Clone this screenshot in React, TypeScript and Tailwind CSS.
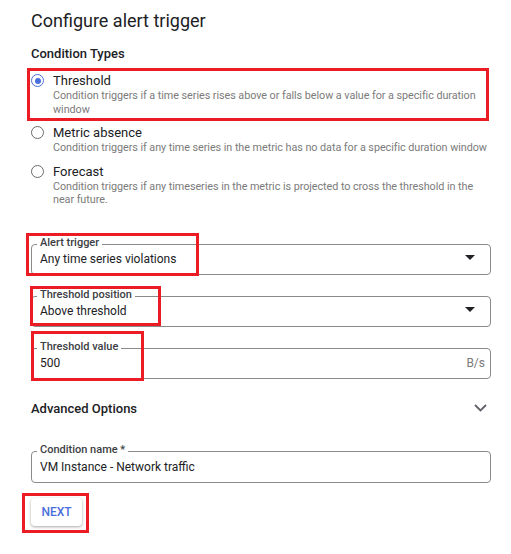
import React from "react";

// Configure alert trigger — form with annotation boxes (red) drawn over it

type OptionProps = {
  title: string;
  desc: string;
  selected?: boolean;
  mark?: boolean;
};

function ConditionOption({ title, desc, selected, mark }: OptionProps) {
  return (
    <div className="relative flex gap-[9px]">
      <div
        className={
          selected
            ? "mt-[2px] flex size-[13px] shrink-0 items-center justify-center rounded-full border-[1.5px] border-[#4a6fdc]"
            : "mt-[2px] size-[13px] shrink-0 rounded-full border border-[#6b6b6b]"
        }
      >
        {selected && <div className="size-[6px] rounded-full bg-[#4a6fdc]" />}
      </div>
      <div className="flex min-w-0 flex-col">
        <p className="text-[13px] leading-[17px] text-[#202124]">{title}</p>
        <p className="text-[10.8px] leading-[13.5px] tracking-[-0.05px] text-[#7b7b7b]">{desc}</p>
      </div>
      {mark && (
        <div className="pointer-events-none absolute -left-[4px] -top-[4px] h-[53px] w-[462px] border-[3px] border-[#ec1c24]" />
      )}
    </div>
  );
}

type FieldProps = {
  label: string;
  value: string;
  select?: boolean;
  suffix?: string;
  tall?: boolean;
  markClass?: string;
};

function OutlinedField({ label, value, select, suffix, tall, markClass }: FieldProps) {
  return (
    <div className="relative">
      <div
        className={`relative flex items-center rounded-[4px] border border-[#8a8a8a] pl-[8px] ${
          tall ? "h-[32px]" : "h-[31px]"
        }`}
      >
        <span className="absolute -top-[8px] left-[5px] bg-white px-[3px] text-[11px] font-medium leading-[12px] text-[#3c4043]">
          {label}
        </span>
        <span className="flex-1 text-[12px] leading-[14px] text-[#202124]">{value}</span>
        {select && (
          <svg width="10" height="5" viewBox="0 0 10 5" className="mb-[4px] mr-[15px]">
            <path d="M0 0h10L5 5z" fill="#202124" />
          </svg>
        )}
        {suffix && (
          <span className="mr-[5px] text-[12px] leading-[14px] text-[#7b7b7b]">{suffix}</span>
        )}
      </div>
      {markClass && <div className={markClass} />}
    </div>
  );
}

export default function App() {
  return (
    <div className="h-[554px] w-[511px] overflow-hidden bg-white pl-[31px] pr-[20px] pt-[9px] font-['Roboto',sans-serif]">
      <h1 className="text-[18px] leading-[24px] text-[#202124]">Configure alert trigger</h1>

      <h2 className="mt-[12px] text-[13px] font-medium leading-[17px] text-[#202124]">
        Condition Types
      </h2>

      {/* Condition types */}
      <div className="-mr-[4px] mt-[10px] flex flex-col gap-[8px]">
        <ConditionOption
          selected
          mark
          title="Threshold"
          desc="Condition triggers if a time series rises above or falls below a value for a specific duration window"
        />
        <ConditionOption
          title="Metric absence"
          desc="Condition triggers if any time series in the metric has no data for a specific duration window"
        />
        <ConditionOption
          title="Forecast"
          desc="Condition triggers if any timeseries in the metric is projected to cross the threshold in the near future."
        />
      </div>

      {/* Trigger fields */}
      <div className="mt-[37px] flex flex-col gap-[21px]">
        <OutlinedField
          label="Alert trigger"
          value="Any time series violations"
          select
          markClass="pointer-events-none absolute -left-[5px] -top-[11px] h-[43px] w-[173px] border-[3px] border-[#ec1c24]"
        />
        <OutlinedField
          label="Threshold position"
          value="Above threshold"
          select
          markClass="pointer-events-none absolute -left-[1px] -top-[10px] h-[40px] w-[131px] border-[3px] border-[#ec1c24]"
        />
        <OutlinedField
          label="Threshold value"
          value="500"
          suffix="B/s"
          markClass="pointer-events-none absolute left-0 -top-[17px] h-[50px] w-[113px] border-[3px] border-[#ec1c24]"
        />
      </div>

      {/* Advanced options */}
      <div className="mt-[21px] flex h-[17px] items-center justify-between">
        <span className="text-[13px] font-medium leading-[17px] text-[#202124]">Advanced Options</span>
        <svg width="13" height="8" viewBox="0 0 13 8" className="mr-[4px]">
          <path d="M1 1l5.5 5.5L12 1" fill="none" stroke="#5f6368" strokeWidth="1.8" />
        </svg>
      </div>

      <div className="mt-[34px]">
        <OutlinedField tall label="Condition name *" value="VM Instance - Network traffic" />
      </div>

      {/* Next */}
      <div className="relative mt-[15px] w-[51px]">
        <button
          type="button"
          className="flex h-[28px] w-[51px] items-center justify-center rounded-[4px] bg-white text-[12px] font-medium text-[#4a6fdc] shadow-[0_1px_3px_rgba(0,0,0,0.35)]"
        >
          NEXT
        </button>
        <div className="pointer-events-none absolute -left-[9px] -top-[5px] h-[40px] w-[67px] border-[3px] border-[#ec1c24]" />
      </div>
    </div>
  );
}
